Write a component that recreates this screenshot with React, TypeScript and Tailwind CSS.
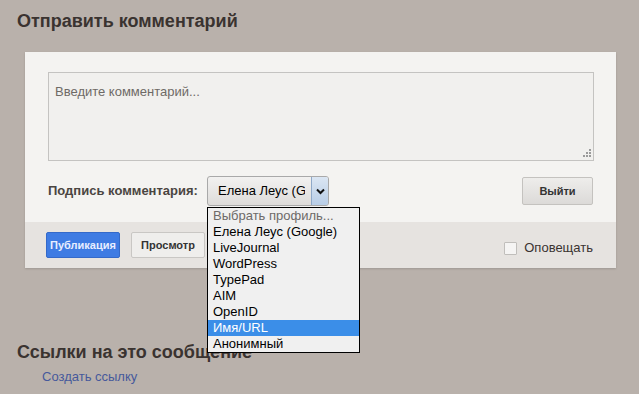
import React from "react";

const items = [
  "Выбрать профиль...",
  "Елена Леус (Google)",
  "LiveJournal",
  "WordPress",
  "TypePad",
  "AIM",
  "OpenID",
  "Имя/URL",
  "Анонимный",
];

export default function App() {
  return (
    <div
      className="relative w-[639px] h-[394px] overflow-hidden bg-[#b9b1ab] text-[#3a3330]"
      style={{ fontFamily: '"Liberation Sans", Arial, sans-serif' }}
    >
      <div className="pl-[17px] pt-[10px]">
        <h2 className="text-[18px] leading-[22px] font-bold text-[#3a3330]">Отправить комментарий</h2>
      </div>
      <div className="ml-[25px] mt-[20px] w-[591px] shadow-[0_1px_2px_rgba(0,0,0,0.15)]">
        <div className="bg-[#f4f3f1] px-[23px] pt-[20px] pb-[16px]">
          <div className="relative h-[89px] w-[546px] border border-[#c4c3c1] bg-[#f1f0ee] px-[6px] py-[6px]">
            <span className="text-[13px] leading-[16px] text-[#6e6a66]">Введите комментарий...</span>
            <svg className="absolute right-[2px] bottom-[2px]" width="10" height="10" viewBox="0 0 10 10">
              <rect x="8" y="1" width="2" height="2" fill="#9a9a9a" />
              <rect x="5" y="4" width="2" height="2" fill="#9a9a9a" />
              <rect x="8" y="4" width="2" height="2" fill="#9a9a9a" />
              <rect x="2" y="7" width="2" height="2" fill="#9a9a9a" />
              <rect x="5" y="7" width="2" height="2" fill="#9a9a9a" />
              <rect x="8" y="7" width="2" height="2" fill="#9a9a9a" />
            </svg>
          </div>
          <div className="mt-[15px] flex items-center h-[30px]">
            <span className="text-[13px] font-bold text-[#4a4541] w-[159px]">Подпись комментария:</span>
            <div className="flex h-[30px] w-[122px] border border-[#a9a9a9] rounded-[3px] bg-gradient-to-b from-[#f2f1f0] to-[#dedcda] overflow-hidden">
              <div className="flex-1 min-w-0 flex items-center pl-[10px] pr-[6px]">
                <div className="w-full overflow-hidden whitespace-nowrap text-[13px] text-black">Елена Леус (Google)</div>
              </div>
              <div className="w-[17px] shrink-0 flex items-center justify-center bg-gradient-to-b from-[#dbe6f3] to-[#b8cde6] border-l border-[#8fa9c9]">
                <svg width="9" height="7" viewBox="0 0 9 7">
                  <path d="M1 1.5 L4.5 5 L8 1.5" stroke="#111" strokeWidth="2" fill="none" />
                </svg>
              </div>
            </div>
            <div className="flex-1" />
            <button className="h-[28px] w-[71px] border border-[#c4c2bf] rounded-[2px] bg-gradient-to-b from-[#eeedeb] to-[#dcdad8] text-[11px] font-bold text-[#333]">
              Выйти
            </button>
          </div>
        </div>
        <div className="bg-[#e6e3e0] h-[46px] flex items-center pl-[21px] pr-[23px]">
          <button className="h-[26px] w-[74px] rounded-[2px] bg-[#3e7be3] border border-[#3469c9] text-[11px] font-bold text-[#e8eeff]">
            Публикация
          </button>
          <button className="ml-[11px] h-[26px] w-[74px] rounded-[2px] bg-[#efeeec] border border-[#c9c7c4] text-[11px] font-bold text-[#333]">
            Просмотр
          </button>
          <div className="flex-1" />
          <div className="flex items-center mt-[6px]">
            <span className="w-[13px] h-[13px] border border-[#c0bebb] bg-[#f5f4f3] rounded-[1px]" />
            <span className="ml-[7px] text-[13px] text-[#3a3330]">Оповещать</span>
          </div>
        </div>
      </div>
      <div className="pl-[17px] mt-[73px]">
        <h2 className="text-[18px] leading-[22px] font-bold text-[#3a3330]">Ссылки на это сообщение</h2>
        <a className="block ml-[25px] mt-[4px] text-[13px] text-[#46599b]">Создать ссылку</a>
      </div>
      <div className="absolute left-[207px] top-[207px] w-[153px] border border-black bg-[#f0f0f0] py-0">
        {items.map((it, i) => (
          <div
            key={it}
            className={
              "h-[16px] leading-[16px] pl-[5px] text-[13px] whitespace-nowrap " +
              (i === 7 ? "bg-[#3b8ee8] text-white" : i === 0 ? "text-[#6d6a68]" : "text-black")
            }
          >
            {it}
          </div>
        ))}
      </div>
    </div>
  );
}
